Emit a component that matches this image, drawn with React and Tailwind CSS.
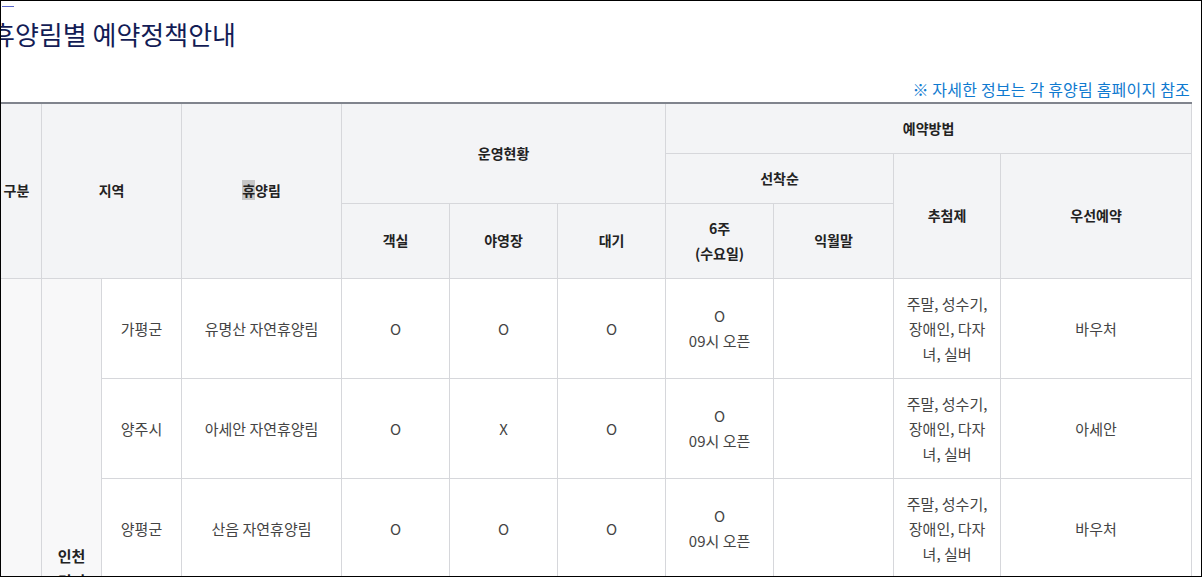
import React from "react";

const rows = [
  { city: "가평군", name: "유명산 자연휴양림", room: "O", camp: "O", wait: "O", pri: "바우처" },
  { city: "양주시", name: "아세안 자연휴양림", room: "O", camp: "X", wait: "O", pri: "아세안" },
  { city: "양평군", name: "산음 자연휴양림", room: "O", camp: "O", wait: "O", pri: "바우처" },
  { city: "양평군", name: "중미산 자연휴양림", room: "O", camp: "O", wait: "O", pri: "바우처" },
];

const bd = "border border-[#d6d7db]";
const th = `${bd} bg-[#f3f4f6] font-semibold text-[#222] text-center align-middle`;
const td = `${bd} text-center align-middle text-[#444] text-[15px]`;

export default function App() {
  return (
    <div
      className="w-[1202px] h-[577px] border border-black overflow-hidden bg-white"
      style={{ fontFamily: '"Noto Sans CJK KR", "Noto Sans", sans-serif' }}
    >
      <div className="ml-[-10px] w-[1201px]">
        <div className="mt-[5px] ml-[11px] w-[12px] h-px bg-[#5866c8]" />
        <h2 className="mt-[9px] text-[26px] leading-[36px] text-[#131c55] font-normal">
          휴양림별 예약정책안내
        </h2>
        <p className="mt-[26px] pr-[2px] text-right text-[16px] leading-[23px] text-[#0f7ad0] tracking-[0.2px]">
          ※ 자세한 정보는 각 휴양림 홈페이지 참조
        </p>
        <table className="mt-[1px] w-[1200px] table-fixed border-collapse border-t-2 border-t-[#80848d] text-[14px] leading-[25px]">
          <colgroup>
            <col className="w-[50px]" />
            <col className="w-[60px]" />
            <col className="w-[80px]" />
            <col className="w-[160px]" />
            <col className="w-[108px]" />
            <col className="w-[108px]" />
            <col className="w-[108px]" />
            <col className="w-[108px]" />
            <col className="w-[120px]" />
            <col className="w-[107px]" />
            <col className="w-[191px]" />
          </colgroup>
          <thead>
            <tr className="h-[50px]">
              <th rowSpan={3} className={`${th} border-t-0`}>구분</th>
              <th rowSpan={3} colSpan={2} className={`${th} border-t-0`}>지역</th>
              <th rowSpan={3} className={`${th} border-t-0`}>
                <span className="bg-[#c6c6c6]">휴</span>양림
              </th>
              <th rowSpan={2} colSpan={3} className={`${th} border-t-0`}>운영현황</th>
              <th colSpan={4} className={`${th} border-t-0`}>예약방법</th>
            </tr>
            <tr className="h-[50px]">
              <th colSpan={2} className={th}>선착순</th>
              <th rowSpan={2} className={th}>추첨제</th>
              <th rowSpan={2} className={th}>우선예약</th>
            </tr>
            <tr className="h-[75px]">
              <th className={th}>객실</th>
              <th className={th}>야영장</th>
              <th className={th}>대기</th>
              <th className={th}>
                6주
                <br />
                (수요일)
              </th>
              <th className={th}>익월말</th>
            </tr>
          </thead>
          <tbody>
            {rows.map((r, i) => (
              <tr key={i} className="h-[100px]">
                {i === 0 && (
                  <>
                    <td rowSpan={4} className={`${bd} bg-[#f8f8f9] align-top pt-[330px] text-center font-semibold text-[#222] text-[15px]`}>
                      수도권
                    </td>
                    <td rowSpan={4} className={`${bd} bg-[#f8f8f9] align-top pt-[264px] text-center font-semibold text-[#222] text-[15px]`}>
                      인천
                      <br />
                      경기
                    </td>
                  </>
                )}
                <td className={td}>{r.city}</td>
                <td className={td}>{r.name}</td>
                <td className={td}>{r.room}</td>
                <td className={td}>{r.camp}</td>
                <td className={td}>{r.wait}</td>
                <td className={td}>
                  O
                  <br />
                  09시 오픈
                </td>
                <td className={td}></td>
                <td className={td}>
                  주말, 성수기,
                  <br />
                  장애인, 다자
                  <br />
                  녀, 실버
                </td>
                <td className={td}>{r.pri}</td>
              </tr>
            ))}
          </tbody>
        </table>
      </div>
    </div>
  );
}
